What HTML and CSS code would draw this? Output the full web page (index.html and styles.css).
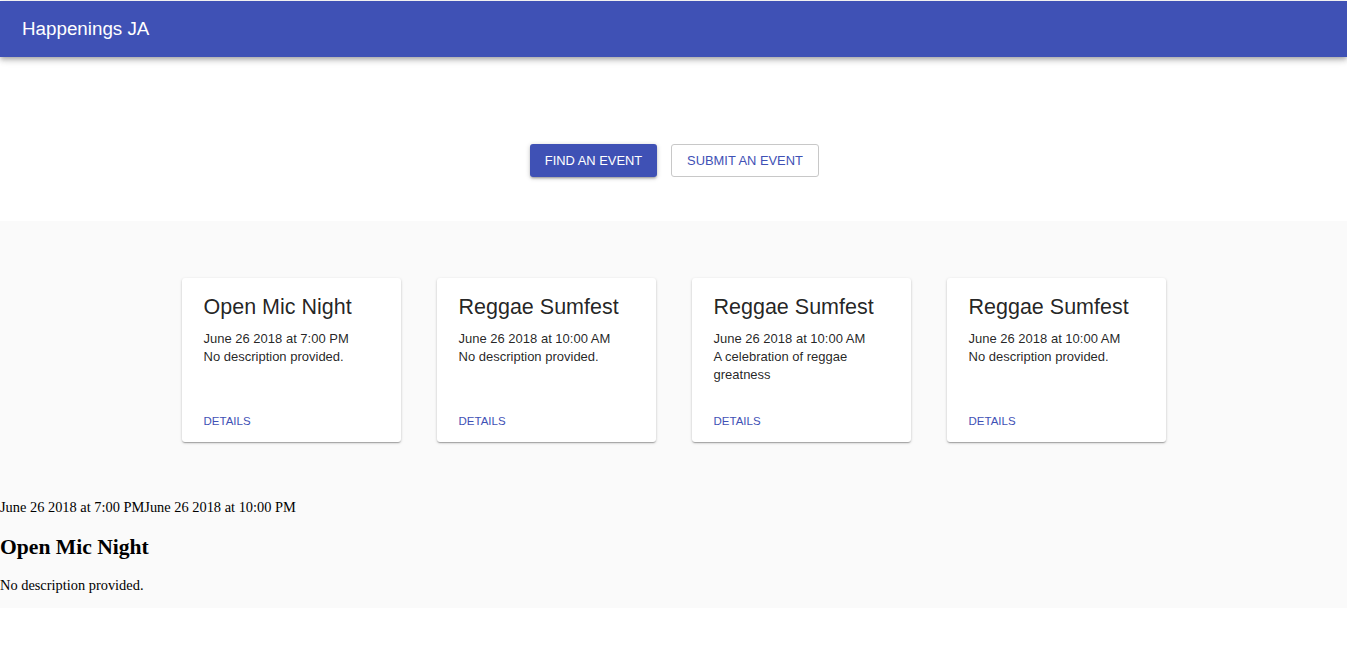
FILE: index.html
```html
<!DOCTYPE html>
<html lang="en">
<head>
<meta charset="utf-8">
<title>Happenings JA</title>
<link rel="stylesheet" href="styles.css">
</head>
<body>
<header class="appbar">
  <h1 class="appbar-title">Happenings JA</h1>
</header>
<section class="actions">
  <button class="btn btn-primary">FIND AN EVENT</button>
  <button class="btn btn-outline">SUBMIT AN EVENT</button>
</section>
<main class="events">
  <div class="card-row">
    <article class="card">
      <h2 class="card-title">Open Mic Night</h2>
      <p class="card-text">June 26 2018 at 7:00 PM</p>
      <p class="card-text">No description provided.</p>
      <a class="card-link" href="#">DETAILS</a>
    </article>
    <article class="card">
      <h2 class="card-title">Reggae Sumfest</h2>
      <p class="card-text">June 26 2018 at 10:00 AM</p>
      <p class="card-text">No description provided.</p>
      <a class="card-link" href="#">DETAILS</a>
    </article>
    <article class="card">
      <h2 class="card-title">Reggae Sumfest</h2>
      <p class="card-text">June 26 2018 at 10:00 AM</p>
      <p class="card-text">A celebration of reggae greatness</p>
      <a class="card-link" href="#">DETAILS</a>
    </article>
    <article class="card">
      <h2 class="card-title">Reggae Sumfest</h2>
      <p class="card-text">June 26 2018 at 10:00 AM</p>
      <p class="card-text">No description provided.</p>
      <a class="card-link" href="#">DETAILS</a>
    </article>
  </div>
  <div class="detail">
    <p class="detail-time">June 26 2018 at 7:00 PMJune 26 2018 at 10:00 PM</p>
    <h2 class="detail-title">Open Mic Night</h2>
    <p class="detail-desc">No description provided.</p>
  </div>
</main>
</body>
</html>
```
FILE: styles.css
```css
html, body {
  margin: 0;
  padding: 0;
  background: #ffffff;
}

body {
  font-family: "Liberation Serif", serif;
}

.appbar {
  margin-top: 1px;
  height: 56px;
  background: #3f51b5;
  display: flex;
  align-items: center;
  padding: 0 22px;
  box-shadow: 0 2px 4px -1px rgba(0,0,0,0.2), 0 4px 5px 0 rgba(0,0,0,0.14), 0 1px 10px 0 rgba(0,0,0,0.12);
  position: relative;
  z-index: 1;
}

.appbar-title {
  margin: 0;
  font-family: "Liberation Sans", Arial, sans-serif;
  font-weight: 400;
  font-size: 18.8px;
  color: #ffffff;
}

.actions {
  display: flex;
  justify-content: center;
  gap: 14px;
  padding: 87px 0 44px 2px;
}

.btn {
  height: 33px;
  box-sizing: border-box;
  font-family: "Liberation Sans", Arial, sans-serif;
  font-size: 12.9px;
  border-radius: 3px;
  padding: 0 14px;
  cursor: pointer;
}

.btn-primary {
  width: 127px;
  background: #3f51b5;
  color: #ffffff;
  border: none;
  box-shadow: 0 1px 5px 0 rgba(0,0,0,0.2), 0 2px 2px 0 rgba(0,0,0,0.14), 0 3px 1px -2px rgba(0,0,0,0.12);
}

.btn-outline {
  width: 148px;
  background: #ffffff;
  color: #3f51b5;
  border: 1px solid #c8c8c8;
}

.events {
  background: #fafafa;
  display: flow-root;
}

.card-row {
  display: flex;
  justify-content: center;
  gap: 36px;
  padding: 57px 0 43px;
}

.card {
  width: 219px;
  height: 164px;
  box-sizing: border-box;
  background: #ffffff;
  border-radius: 3px;
  padding: 17px 22px 13px;
  display: flex;
  flex-direction: column;
  font-family: "Liberation Sans", Arial, sans-serif;
  box-shadow: 0 1px 3px 0 rgba(0,0,0,0.2), 0 1px 1px 0 rgba(0,0,0,0.14), 0 2px 1px -1px rgba(0,0,0,0.12);
}

.card-title {
  margin: 0 0 11px;
  font-size: 21.5px;
  font-weight: 400;
  line-height: 24px;
  color: rgba(0,0,0,0.87);
}

.card-text {
  margin: 0;
  font-size: 13px;
  line-height: 18px;
  color: rgba(0,0,0,0.87);
}

.card-link {
  margin-top: auto;
  font-size: 11.5px;
  line-height: 16px;
  color: #3f51b5;
  text-decoration: none;
}

.detail {
  font-family: "Liberation Serif", "Times New Roman", serif;
  color: #000000;
}

.detail-time,
.detail-desc {
  font-size: 14.4px;
  margin: 14.4px 0;
}

.detail-desc {
  margin-bottom: 13.4px;
}

.detail-title {
  font-size: 21.6px;
  font-weight: 700;
  margin: 19px 0 17px;
}
```
